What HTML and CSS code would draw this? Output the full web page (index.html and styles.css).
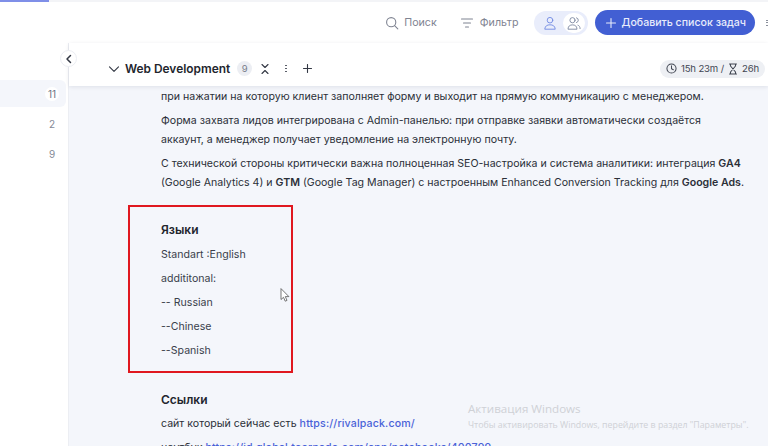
FILE: index.html
```html
<!DOCTYPE html>
<html lang="ru">
<head>
    <meta charset="UTF-8">
    <meta name="viewport" content="width=device-width, initial-scale=1.0">
    <title>Web Development</title>
    <link rel="stylesheet" href="styles.css">
</head>
<body>
    <div class="progress"><div class="progress-fill"></div></div>

    <header class="topbar">
        <div class="tool tool-search">
            <svg width="14" height="14" viewBox="0 0 14 14"><circle cx="6.2" cy="6.2" r="4.6"/><path d="M9.6 9.6l3.2 3.2"/></svg>
            <span>Поиск</span>
        </div>
        <div class="tool tool-filter">
            <svg width="14" height="14" viewBox="0 0 14 14"><path d="M1.5 3h11M3.5 7h7M5.5 11h3"/></svg>
            <span>Фильтр</span>
        </div>
        <div class="toggle">
            <span class="toggle-item">
                <svg width="14" height="14" viewBox="0 0 14 14"><circle cx="7" cy="4.2" r="2.8"/><path d="M1.8 12.8c.3-3 2.4-4 5.2-4s4.9 1 5.2 4z"/></svg>
            </span>
            <span class="toggle-item active">
                <svg width="14" height="14" viewBox="0 0 14 14"><circle cx="5.5" cy="4.2" r="2.6"/><path d="M1 12.8c.2-2.900 2-3.900 4.500-3.900s4.300 1 4.500 3.900zM9.500 1.800a2.500 2.500 0 0 1 0 4.800M11 9.200c1.300.4 2 1.600 2.100 3.400"/></svg>
            </span>
        </div>
        <button class="add-btn">
            <svg width="12" height="12" viewBox="0 0 12 12"><path d="M6 1.500v9M1.500 6h9"/></svg>
            Добавить список задач
        </button>
        <span class="more"><i></i><i></i><i></i></span>
    </header>

    <div class="app">
        <aside class="sidebar">
            <button class="collapse">
                <svg width="10" height="10" viewBox="0 0 10 10"><path d="M6.500 1.500L3 5l3.500 3.500"/></svg>
            </button>
            <div class="side-list">
                <div class="side-row selected"><span class="count">11</span></div>
                <div class="side-row"><span class="count">2</span></div>
                <div class="side-row"><span class="count">9</span></div>
            </div>
        </aside>

        <main class="main">
            <div class="section-head">
                <svg class="icon chevron" width="12" height="12" viewBox="0 0 12 12"><path d="M1.500 3.800L6 8.300l4.500-4.500"/></svg>
                <h2>Web Development</h2>
                <span class="badge">9</span>
                <svg class="icon expand" width="8" height="12" viewBox="0 0 8 12"><path d="M1 1.500L4 4.500 7 1.500M1 10.500L4 7.500l3 3"/></svg>
                <span class="dots"><i></i><i></i><i></i></span>
                <svg class="icon plus" width="9" height="9" viewBox="0 0 9 9"><path d="M4.500.5v8M.5 4.500h8"/></svg>
                <div class="time">
                    <svg width="11" height="11" viewBox="0 0 12 12"><circle cx="6" cy="6" r="5"/><path d="M6 3v3.200l2 1.100"/></svg>
                    <span>15h 23m /</span>
                    <svg width="10" height="12" viewBox="0 0 10 12"><path d="M1.500 1h7M1.500 11h7M2.500 1v2L7.500 9v2M7.500 1v2L2.500 9v2"/></svg>
                    <span>26h</span>
                </div>
            </div>

            <div class="content">
                <p>при нажатии на которую клиент заполняет форму и выходит на прямую коммуникацию с менеджером.</p>
                <p>Форма захвата лидов интегрирована с Admin-панелью: при отправке заявки автоматически создаётся<br>аккаунт, а менеджер получает уведомление на электронную почту.</p>
                <p>С технической стороны критически важна полноценная SEO-настройка и система аналитики: интеграция <b>GA4</b><br>(Google Analytics 4) и <b>GTM</b> (Google Tag Manager) с настроенным Enhanced Conversion Tracking для <b>Google Ads</b>.</p>

                <section class="marked">
                    <h3>Языки</h3>
                    <p>Standart :English</p>
                    <p>addititonal:</p>
                    <p>-- Russian</p>
                    <p>--Chinese</p>
                    <p>--Spanish</p>
                </section>

                <h3 class="links-title">Ссылки</h3>
                <p>сайт который сейчас есть <a href="#">https://rivalpack.com/</a></p>
                <p>ноутбук <a href="#">https://id.global.toornado.com/app/notebooks/400799</a></p>
            </div>
        </main>
    </div>

    <svg class="cursor" width="10" height="15" viewBox="0 0 10 15"><path d="M1 1v10.500l2.500-2.200 1.700 3.900 1.800-.8-1.700-3.800H8.500z"/></svg>

    <div class="watermark">
        <div class="wm-title">Активация Windows</div>
        <div class="wm-text">Чтобы активировать Windows, перейдите в раздел "Параметры".</div>
    </div>
</body>
</html>
```

FILE: styles.css
```css
html, body {
    margin: 0;
    height: 100%;
    overflow: hidden;
}
body {
    font-family: Inter, "Noto Sans", sans-serif;
    font-size: 10.6px;
    color: #2b2f38;
    background-color: #fff;
    display: flex;
    flex-direction: column;
}
svg {
    fill: none;
    stroke: currentColor;
    stroke-width: 1.1;
    stroke-linecap: round;
    stroke-linejoin: round;
    flex: none;
}
.progress {
    height: 2px;
    background-color: #f3f4f7;
    flex: none;
}
.progress-fill {
    width: 49px;
    height: 100%;
    background-color: #7f8fe8;
}
.topbar {
    display: flex;
    align-items: center;
    justify-content: flex-end;
    height: 41px;
    flex: none;
}
.tool {
    display: flex;
    align-items: center;
    font-size: 10.7px;
    color: #7f8492;
}
.tool-search {
    gap: 5px;
    margin-right: 23px;
}
.tool-filter {
    gap: 6px;
    margin-right: 15px;
}
.toggle {
    display: flex;
    align-items: center;
    justify-content: space-between;
    width: 54px;
    height: 24px;
    padding: 0 3px 0 5px;
    box-sizing: border-box;
    background-color: #e9edfb;
    border-radius: 12px;
    margin-right: 7px;
}
.toggle-item {
    display: flex;
    align-items: center;
    justify-content: center;
    width: 22px;
    height: 20px;
    border-radius: 10px;
    color: #7089e2;
}
.toggle-item svg {
    stroke-width: 0.9;
}
.toggle-item.active {
    background-color: #fff;
    color: #7c879f;
}
.add-btn {
    display: flex;
    align-items: center;
    gap: 5px;
    height: 25px;
    padding: 0 9px 0 10px;
    border: none;
    border-radius: 13px;
    background-color: #425fd3;
    color: #e8ecfb;
    font-family: inherit;
    font-size: 10.6px;
    font-weight: 500;
    white-space: nowrap;
}
.more {
    display: flex;
    flex-direction: column;
    gap: 1.5px;
    width: 2px;
    margin-left: 11px;
    flex: none;
}
.more i {
    height: 1px;
    background-color: #8a8f9b;
}
.app {
    flex: 1;
    display: flex;
    min-height: 0;
}
.sidebar {
    width: 69px;
    flex: none;
    box-sizing: border-box;
    border-right: 1px solid #eceef3;
    position: relative;
    padding-top: 37px;
}
.collapse {
    position: absolute;
    top: 7px;
    right: -9px;
    width: 17px;
    height: 17px;
    padding: 0;
    display: flex;
    align-items: center;
    justify-content: center;
    border: 1px solid #eceef3;
    border-radius: 50%;
    background-color: #fff;
    color: #333844;
    z-index: 2;
}
.collapse svg {
    stroke-width: 1.5;
}
.side-row {
    display: flex;
    justify-content: flex-end;
    align-items: center;
    height: 27px;
    margin-right: 2px;
    margin-bottom: 3px;
    padding-right: 7px;
    border-radius: 0 6px 6px 0;
}
.side-row.selected {
    background-color: #f4f6fb;
}
.count {
    width: 14px;
    height: 14px;
    border-radius: 50%;
    display: flex;
    align-items: center;
    justify-content: center;
    font-size: 10px;
    color: #858a97;
}
.selected .count {
    background-color: #fff;
    color: #6e7382;
}
.main {
    flex: 1;
    min-width: 0;
    display: flex;
    flex-direction: column;
    background-color: #f4f6fb;
}
.section-head {
    display: flex;
    align-items: center;
    height: 43px;
    flex: none;
    padding: 8px 3px 0 39px;
    box-sizing: border-box;
    background-color: #fff;
    box-shadow: 0 1px 4px rgba(30,40,70,0.1);
    position: relative;
    color: #333844;
}
.section-head h2 {
    margin: 0 0 0 5px;
    font-size: 11.9px;
    font-weight: 600;
    color: #22252d;
}
.badge {
    width: 15px;
    height: 15px;
    margin-left: 7px;
    border-radius: 50%;
    background-color: #eceef3;
    color: #7a7f8c;
    font-size: 9.5px;
    display: flex;
    align-items: center;
    justify-content: center;
}
.expand {
    margin-left: 9px;
}
.dots {
    display: flex;
    flex-direction: column;
    gap: 1.5px;
    margin-left: 16px;
}
.dots i {
    width: 1.5px;
    height: 1.5px;
    background-color: #444955;
    border-radius: 50%;
}
.plus {
    margin-left: 16px;
}
.time {
    margin-left: auto;
    display: flex;
    align-items: center;
    gap: 4px;
    height: 18px;
    padding: 0 6px;
    border-radius: 9px;
    background-color: #eef0f4;
    font-size: 9.6px;
    letter-spacing: -0.15px;
    color: #424753;
}
.content {
    flex: 1;
    min-height: 0;
    overflow: hidden;
    padding: 0 0 0 92px;
}
.content p {
    margin: 0;
    line-height: 19px;
    white-space: nowrap;
}
.content > p {
    padding-top: 5px;
    color: #2b2f38;
}
.content > p:first-child {
    padding-top: 1px;
}
.content b {
    font-weight: 600;
}
.marked {
    margin: 13px 0 0 -33px;
    width: 165px;
    height: 168px;
    box-sizing: border-box;
    border: 2px solid #e0181f;
    padding: 13px 0 0 31px;
}
.marked p {
    padding-top: 5px;
    color: #3a3f4b;
}
.marked h3 {
    margin-bottom: 1px;
}
.content h3 {
    font-size: 12px;
    font-weight: 600;
    line-height: 19px;
    color: #22252d;
    margin-top: 0;
}
.content .links-title {
    margin: 17px 0 0;
}
.content a {
    color: #4a62d8;
    font-weight: 500;
    letter-spacing: 0.15px;
    text-decoration: none;
}
.cursor {
    position: absolute;
    left: 280px;
    top: 288px;
    fill: #fff;
    stroke: #555;
    stroke-width: 0.8;
}
.watermark {
    position: absolute;
    left: 468px;
    top: 401px;
    color: #cfd1d6;
    white-space: nowrap;
}
.wm-title {
    font-family: "Open Sans", sans-serif;
    font-size: 11.6px;
    line-height: 16px;
}
.wm-text {
    font-family: "Open Sans", sans-serif;
    font-size: 8.8px;
    letter-spacing: 0.01px;
    line-height: 12px;
    margin-top: 2px;
}
```
